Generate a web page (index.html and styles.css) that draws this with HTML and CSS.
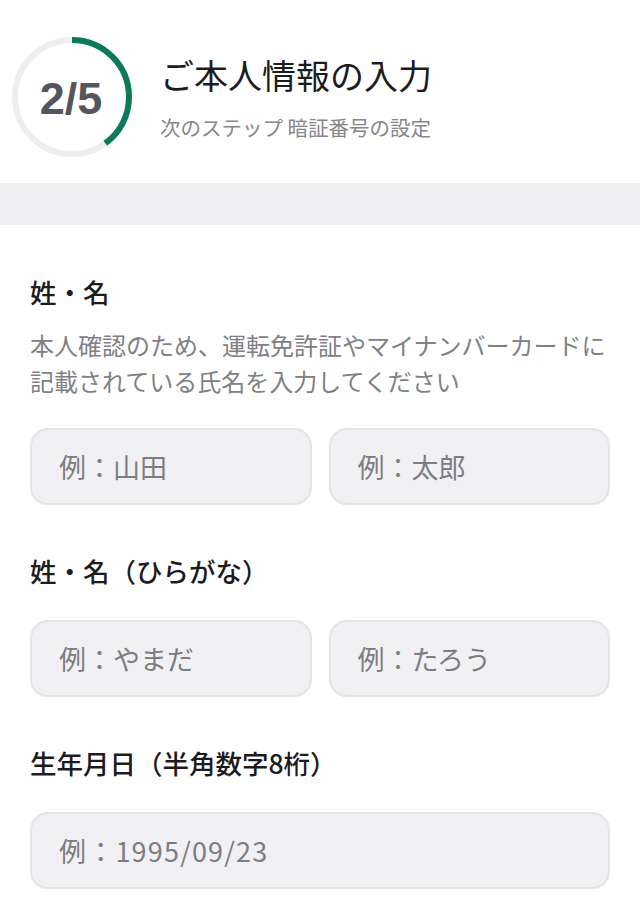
FILE: index.html
```html
<!DOCTYPE html>
<html lang="ja">
<head>
<meta charset="utf-8">
<title>ご本人情報の入力</title>
<link rel="stylesheet" href="styles.css">
</head>
<body>
<header class="header">
  <div class="progress">
    <svg class="progress-ring" width="120" height="120" viewBox="0 0 120 120">
      <circle cx="60" cy="60" r="57" fill="none" stroke="#eeeef0" stroke-width="6"/>
      <circle cx="60" cy="60" r="57" fill="none" stroke="#0c7a5a" stroke-width="6" stroke-dasharray="143.3 400" transform="rotate(-90 60 60)"/>
    </svg>
    <span class="progress-text">2/5</span>
  </div>
  <div class="header-text">
    <h1 class="title">ご本人情報の入力</h1>
    <p class="subtitle">次のステップ 暗証番号の設定</p>
  </div>
</header>
<div class="band"></div>
<main class="form">
  <section class="group">
    <h2 class="label label-with-desc">姓・名</h2>
    <p class="desc">本人確認のため、運転免許証やマイナンバーカードに記載されている氏名を入力してください</p>
    <div class="row">
      <input class="field" type="text" placeholder="例：山田">
      <input class="field" type="text" placeholder="例：太郎">
    </div>
  </section>
  <section class="group">
    <h2 class="label">姓・名（ひらがな）</h2>
    <div class="row">
      <input class="field" type="text" placeholder="例：やまだ">
      <input class="field" type="text" placeholder="例：たろう">
    </div>
  </section>
  <section class="group">
    <h2 class="label">生年月日（半角数字8桁）</h2>
    <div class="row">
      <input class="field field-date" type="text" placeholder="例：1995/09/23">
    </div>
  </section>
</main>
</body>
</html>
```
FILE: styles.css
```css
* { box-sizing: border-box; }
html, body { margin: 0; padding: 0; background: #ffffff; }
body {
  font-family: "Noto Sans CJK JP", "Noto Sans", sans-serif;
  color: #1e1e20;
  width: 640px;
  overflow: hidden;
}
.header {
  display: flex;
  align-items: center;
  padding: 37px 0 26px 12px;
  gap: 28px;
}
.progress {
  position: relative;
  width: 120px;
  height: 120px;
  flex: none;
}
.progress-ring { display: block; }
.progress-text {
  position: absolute;
  inset: 0;
  display: flex;
  align-items: center;
  justify-content: center;
  font-family: "Liberation Sans", Arial, sans-serif;
  font-weight: 700;
  font-size: 45px;
  color: #55565c;
  padding-top: 4px;
  padding-right: 2px;
}
.header-text { display: flex; flex-direction: column; }
.title {
  margin: 0;
  font-size: 34px;
  line-height: 44px;
  font-weight: 400;
  color: #1c1c1e;
}
.subtitle {
  margin: 16px 0 0;
  font-size: 20.5px;
  line-height: 28px;
  color: #86868b;
}
.band { height: 42px; background: #f0f0f2; }
.form {
  padding: 49px 30px 0;
  display: flex;
  flex-direction: column;
  gap: 48px;
}
.label {
  margin: 0 0 31px;
  font-size: 26.5px;
  line-height: 36px;
  font-weight: 500;
  color: #1c1c1e;
}
.label.label-with-desc { margin-bottom: 17px; }
.desc {
  margin: 0 0 29px;
  font-size: 24px;
  line-height: 36px;
  color: #808086;
}
.row { display: flex; gap: 17px; }
.field {
  flex: 1;
  min-width: 0;
  height: 77px;
  border: 2px solid #e3e3e8;
  border-radius: 18px;
  background: #f1f1f4;
  padding: 0 0 0 27px;
  font-family: "Noto Sans CJK JP", "Noto Sans", sans-serif;
  font-size: 27px;
  color: #1c1c1e;
  outline: none;
}
.field-date { letter-spacing: 1.2px; }
.field::placeholder { color: #7c7c82; opacity: 1; }
```
